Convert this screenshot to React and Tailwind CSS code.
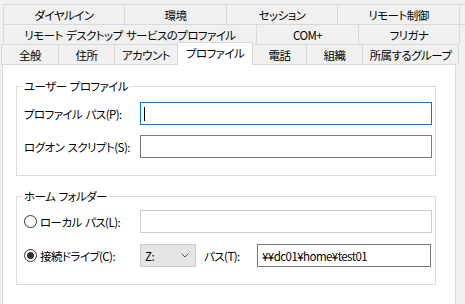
import React from "react";

const S = "\u2004";

function Tab({ className, children }) {
  return (
    <div className={"flex items-center justify-center bg-[#f0f0f0] border-[#d9d9d9] " + className}>
      <span className="whitespace-nowrap leading-[14px]">{children}</span>
    </div>
  );
}

function Radio({ checked }) {
  return (
    <span className="flex h-[13px] w-[13px] shrink-0 items-center justify-center rounded-full border border-[#333333] bg-white">
      {checked ? <span className="h-[7px] w-[7px] rounded-full bg-[#333333]" /> : null}
    </span>
  );
}

export default function App() {
  return (
    <div className="flex h-[304px] w-[465px] flex-col overflow-hidden bg-[#f0f0f0] text-[11.5px] tracking-[-0.55px] text-black font-['Noto_Sans_CJK_JP','Noto_Sans',sans-serif] [font-feature-settings:'palt']">
      {/* Tab row 1 */}
      <div className="ml-[3px] mt-[4px] flex h-[20px] border-l border-t border-[#d9d9d9]">
        <Tab className="w-[121px] border-r">ダイヤルイン</Tab>
        <Tab className="w-[102px] border-r">環境</Tab>
        <Tab className="w-[111px] border-r">セッション</Tab>
        <Tab className="w-[122px] border-r">リモート制御</Tab>
      </div>
      {/* Tab row 2 */}
      <div className="ml-[3px] flex h-[20px] border-l border-t border-[#d9d9d9]">
        <Tab className="w-[253px] border-r">{`リモート${S}デスクトップ${S}サービスのプロファイル`}</Tab>
        <Tab className="w-[102px] border-r">COM+</Tab>
        <Tab className="w-[101px] border-r">フリガナ</Tab>
      </div>
      {/* Tab row 3 */}
      <div className="relative z-10 ml-[1px] -mt-[2px] flex h-[22px] items-end">
        <Tab className="h-[20px] w-[58px] border-l border-r border-t">全般</Tab>
        <Tab className="h-[20px] w-[56px] border-r border-t">住所</Tab>
        <Tab className="h-[20px] w-[62px] border-t">アカウント</Tab>
        <div className="-mb-px flex h-[23px] w-[76px] items-start justify-center border-l border-r border-t border-[#d9d9d9] bg-white pt-[3px]">
          <span className="whitespace-nowrap leading-[14px]">プロファイル</span>
        </div>
        <Tab className="h-[20px] w-[54px] border-r border-t">電話</Tab>
        <Tab className="h-[20px] w-[56px] border-r border-t">組織</Tab>
        <Tab className="h-[20px] w-[96px] border-r border-t">所属するグループ</Tab>
      </div>

      {/* Panel */}
      <div className="ml-[2px] flex w-[454px] flex-1 flex-col border-l border-r border-t border-[#d9d9d9] bg-white">
        {/* Group 1 */}
        <div className="relative ml-[13px] mt-[21px] h-[90px] w-[420px] border border-[#dcdcdc] pl-[7px] pt-[15px]">
          <span className="absolute -top-[8px] left-[5px] whitespace-nowrap bg-white px-[2px] leading-[14px]">{`ユーザー${S}プロファイル`}</span>
          <div className="flex h-[23px] items-center">
            <span className="w-[116px] whitespace-nowrap leading-[14px]">{`プロファイル${S}パス(P):`}</span>
            <div className="flex h-[23px] w-[292px] items-center border border-[#0078d7] pl-[3px]">
              <span className="h-[14px] w-px bg-black" />
            </div>
          </div>
          <div className="mt-[10px] flex h-[23px] items-center">
            <span className="w-[116px] whitespace-nowrap leading-[14px]">{`ログオン${S}スクリプト(S):`}</span>
            <div className="h-[23px] w-[292px] border border-[#7a7a7a]" />
          </div>
        </div>

        {/* Group 2 */}
        <div className="relative ml-[13px] mt-[20px] h-[89px] w-[420px] border border-[#dcdcdc] pl-[7px] pt-[13px]">
          <span className="absolute -top-[8px] left-[5px] whitespace-nowrap bg-white px-[2px] leading-[14px]">{`ホーム${S}フォルダー`}</span>
          <div className="flex h-[23px] items-center">
            <div className="flex w-[116px] items-center gap-[3px]">
              <Radio checked={false} />
              <span className="whitespace-nowrap leading-[14px]">{`ローカル${S}パス(L):`}</span>
            </div>
            <div className="h-[23px] w-[292px] border border-[#cccccc]" />
          </div>
          <div className="mt-[11px] flex h-[23px] items-center">
            <div className="flex w-[116px] items-center gap-[3px]">
              <Radio checked={true} />
              <span className="whitespace-nowrap leading-[14px]">接続ドライブ(C):</span>
            </div>
            <div className="flex h-[23px] w-[56px] items-center justify-between border border-[#cccccc] bg-[#e5e5e5] pl-[4px] pr-[6px]">
              <span className="leading-[14px]">Z:</span>
              <svg width="8" height="5" viewBox="0 0 8 5">
                <polyline points="0.5,0.5 4,4 7.5,0.5" fill="none" stroke="#555555" strokeWidth="1" />
              </svg>
            </div>
            <span className="ml-[8px] w-[53px] whitespace-nowrap leading-[14px]">パス(T):</span>
            <div className="flex h-[23px] w-[174px] items-center border border-[#7a7a7a] pl-[4px]">
              <span className="whitespace-nowrap leading-[14px]">¥¥dc01¥home¥test01</span>
            </div>
          </div>
        </div>
      </div>
    </div>
  );
}
